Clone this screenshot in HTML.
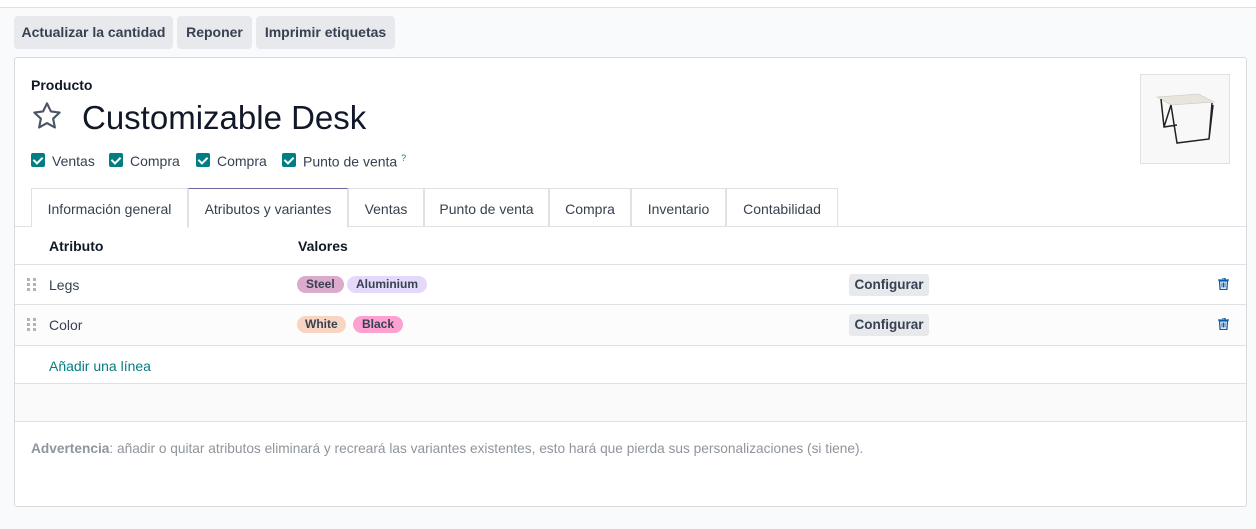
<!DOCTYPE html>
<html><head><meta charset="utf-8"><style>
*{box-sizing:border-box;margin:0;padding:0}
body{width:1256px;height:529px;background:#f9fafb;font-family:"Liberation Sans",sans-serif;font-size:14px;color:#374151;position:relative;overflow:hidden}
.a{position:absolute}
.topline{left:0;top:0;width:1256px;height:8px;background:#fff;border-bottom:1px solid #dee2e6}
.btn{top:16px;height:33px;background:#e7e9ed;border-radius:4px;font-weight:bold;color:#374151;line-height:33px;text-align:center;font-size:14px}
.sheet{left:14px;top:57px;width:1233px;height:450px;background:#fff;border:1px solid #d8dadd;border-radius:3px}
.cb{width:14px;height:14px;background:#017e84;border-radius:2px}
.cb:after{content:"";position:absolute;left:4px;top:2px;width:4px;height:7px;border:solid #fff;border-width:0 2px 2px 0;transform:rotate(45deg)}
.cl{font-size:14px;color:#374151;top:153px}
.tab{top:188px;height:39px;border:1px solid #dee2e6;border-bottom:none;line-height:40px;text-align:center;color:#374151;margin-left:-1px}
.hl{left:15px;width:1231px;height:1px;background:#dee2e6}
.tag{height:17px;border-radius:9px;font-size:12px;line-height:17px;padding:0 10px;color:#374151}
.cfg{left:849px;width:80px;height:22px;background:#e7e9ed;border-radius:3px;font-weight:bold;line-height:22px;text-align:center;color:#374151;font-size:13.5px}
.grip{left:27px;width:10px;height:14px}
</style></head><body>
<div class="a topline"></div>
<div class="a btn" style="left:14px;width:159px">Actualizar la cantidad</div>
<div class="a btn" style="left:177px;width:75px">Reponer</div>
<div class="a btn" style="left:256px;width:139px">Imprimir etiquetas</div>
<div class="a sheet"></div>
<div class="a" style="left:31px;top:77px;font-weight:bold;color:#111827;font-size:14px">Producto</div>
<svg class="a" style="left:30px;top:100px" width="34" height="32" viewBox="0 0 24 24"><path d="M12 2.5l2.9 6.1 6.6.8-4.9 4.6 1.3 6.6L12 17.3l-5.9 3.3 1.3-6.6-4.9-4.6 6.6-.8z" fill="none" stroke="#4b5563" stroke-width="1.6" stroke-linejoin="round"/></svg>
<div class="a" style="left:82px;top:99px;font-size:33px;color:#111827">Customizable Desk</div>
<div class="a cb" style="left:31px;top:153px"></div><div class="a cl" style="left:52px">Ventas</div>
<div class="a cb" style="left:109px;top:153px"></div><div class="a cl" style="left:130px">Compra</div>
<div class="a cb" style="left:196px;top:153px"></div><div class="a cl" style="left:217px">Compra</div>
<div class="a cb" style="left:282px;top:153px"></div><div class="a cl" style="left:303px">Punto de venta <sup style="color:#017e84;font-size:9px">?</sup></div>
<div class="a" style="left:1140px;top:74px;width:90px;height:90px;border:1px solid #dee2e6;background:#f8f8f8">
<svg width="88" height="88" viewBox="0 0 88 88"><path d="M16 22 L57 19 L73 27 L30 30 Z" fill="#e8e5df" stroke="#c8c4bc" stroke-width=".6"/><path d="M20 24 L23 52 L36 50 M23 52 L30 30 M30 30 L36 68 L68 64 L71 28 M68 64 L72 30" stroke="#222" stroke-width="1.5" fill="none"/></svg></div>
<div class="a" style="left:15px;top:226px;width:1231px;height:1px;background:#dee2e6"></div>
<div class="a tab" style="left:32px;width:157px;background:#fff">Información general</div>
<div class="a tab" style="left:189px;width:160px;background:#fff;border-top:1px solid #71639e;height:40px">Atributos y variantes</div>
<div class="a tab" style="left:349px;width:76px">Ventas</div>
<div class="a tab" style="left:425px;width:125px">Punto de venta</div>
<div class="a tab" style="left:550px;width:82px">Compra</div>
<div class="a tab" style="left:632px;width:95px">Inventario</div>
<div class="a tab" style="left:727px;width:112px">Contabilidad</div>
<div class="a" style="left:49px;top:238px;font-weight:bold;color:#111827">Atributo</div>
<div class="a" style="left:298px;top:238px;font-weight:bold;color:#111827">Valores</div>
<div class="a hl" style="top:264px"></div>
<div class="a" style="left:15px;top:305px;width:1231px;height:40px;background:#fcfcfc"></div>
<div class="a hl" style="top:304px"></div>
<div class="a hl" style="top:345px"></div>
<div class="a" style="left:15px;top:384px;width:1231px;height:37px;background:#fafafa"></div>
<div class="a hl" style="top:383px"></div>
<div class="a hl" style="top:421px"></div>
<svg class="a grip" style="top:278px" viewBox="0 0 10 14"><g fill="#adb5bd"><rect x="0" y="0" width="3" height="3"/><rect x="6" y="0" width="3" height="3"/><rect x="0" y="5" width="3" height="3"/><rect x="6" y="5" width="3" height="3"/><rect x="0" y="10" width="3" height="3"/><rect x="6" y="10" width="3" height="3"/></g></svg>
<svg class="a grip" style="top:318px" viewBox="0 0 10 14"><g fill="#adb5bd"><rect x="0" y="0" width="3" height="3"/><rect x="6" y="0" width="3" height="3"/><rect x="0" y="5" width="3" height="3"/><rect x="6" y="5" width="3" height="3"/><rect x="0" y="10" width="3" height="3"/><rect x="6" y="10" width="3" height="3"/></g></svg>
<div class="a" style="left:49px;top:277px">Legs</div>
<div class="a" style="left:49px;top:317px">Color</div>
<div class="a tag" style="left:297px;top:276px;background:#dcaacb;padding:0 9px;font-weight:bold">Steel</div>
<div class="a tag" style="left:347px;top:276px;background:#e5d9fb;font-weight:bold;padding:0 9px">Aluminium</div>
<div class="a tag" style="left:297px;top:316px;background:#f8d5c3;font-weight:bold;padding:0 8px">White</div>
<div class="a tag" style="left:353px;top:316px;background:#fea0d0;font-weight:bold;padding:0 9px">Black</div>
<div class="a cfg" style="top:274px">Configurar</div>
<div class="a cfg" style="top:314px">Configurar</div>
<svg class="a" style="left:1218px;top:278px" width="11" height="12" viewBox="0 0 11 12"><path d="M0 2h11M4 0h3v2M1.5 3h8l-.6 8.5h-6.8z" fill="#fff" stroke="#0b5cad" stroke-width="1.3"/><path d="M4 4.5v5M5.5 4.5v5M7 4.5v5" stroke="#0b5cad"/></svg>
<svg class="a" style="left:1218px;top:318px" width="11" height="12" viewBox="0 0 11 12"><path d="M0 2h11M4 0h3v2M1.5 3h8l-.6 8.5h-6.8z" fill="#fff" stroke="#0b5cad" stroke-width="1.3"/><path d="M4 4.5v5M5.5 4.5v5M7 4.5v5" stroke="#0b5cad"/></svg>
<div class="a" style="left:49px;top:358px;color:#017e84">Añadir una línea</div>
<div class="a" style="left:31px;top:441px;color:#8f959c;font-size:13.7px"><b>Advertencia</b>: añadir o quitar atributos eliminará y recreará las variantes existentes, esto hará que pierda sus personalizaciones (si tiene).</div>
</body></html>
